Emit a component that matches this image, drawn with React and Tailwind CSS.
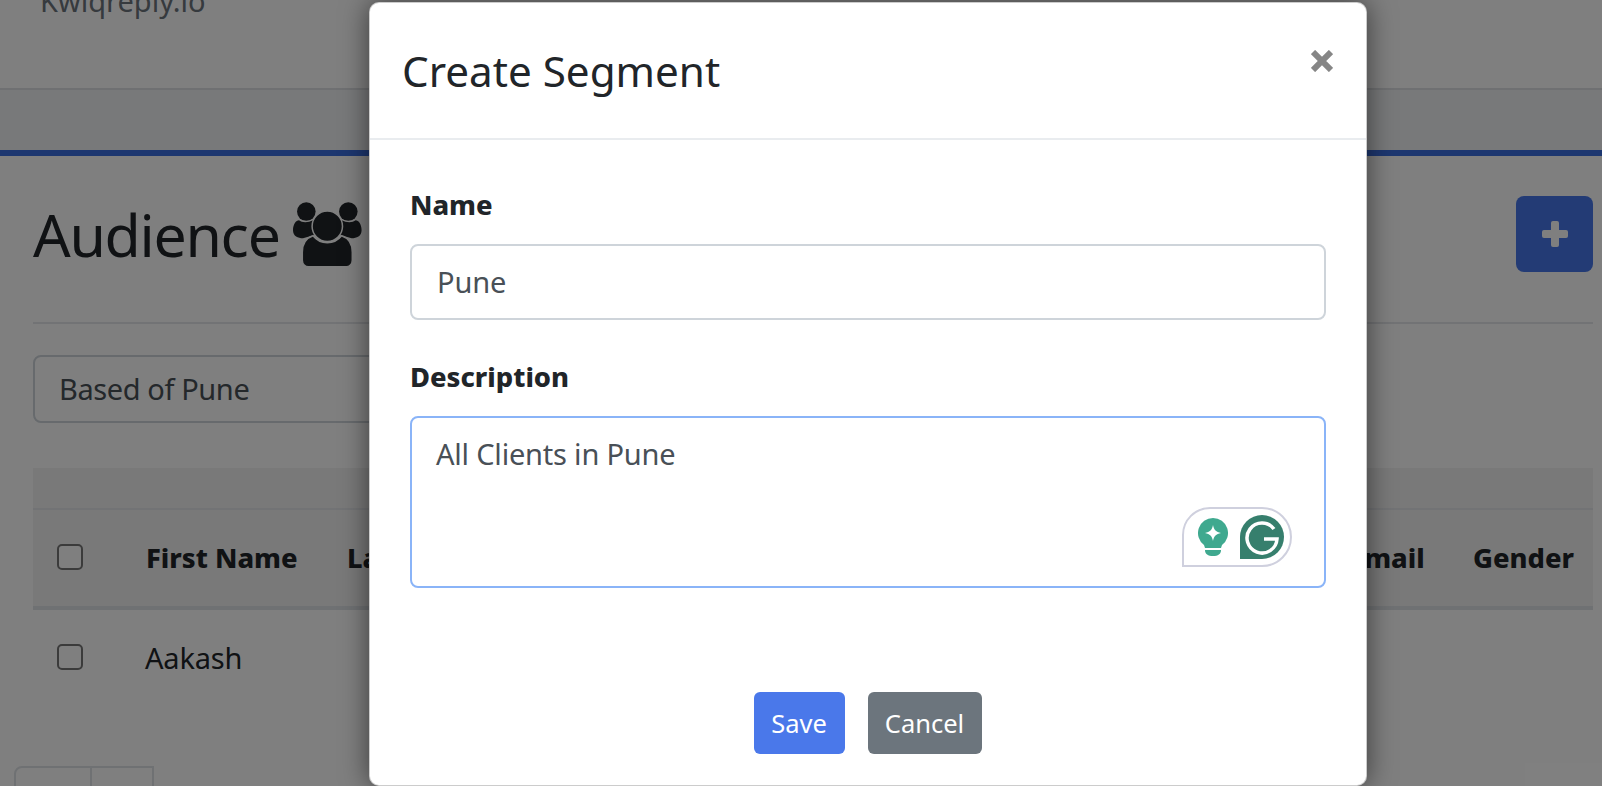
import React from 'react';

const font = { fontFamily: '"Noto Sans", "Open Sans", sans-serif' };

function UsersIcon() {
  return (
    <svg viewBox="0 0 69 64.500" className="w-[69px] h-[65px] shrink-0" fill="#212529" stroke="#fff" strokeWidth="1.500">
      <path stroke="none" d="M0 28C0 22 3 18 6 18 9 20.500 15 20.500 20 18L24 32 10 36C5 36 0 34 0 28z" />
      <path stroke="none" d="M68.600 28C68.600 22 65.600 18 62.600 18 59.600 20.500 53.600 20.500 48.600 18L44.600 32 58.600 36C63.600 36 68.600 34 68.600 28z" />
      <circle cx="13.300" cy="9.300" r="9.300" stroke="none" />
      <circle cx="55.300" cy="9.300" r="9.300" stroke="none" />
      <circle cx="34.300" cy="24" r="15.200" />
      <path d="M9.300 50C9.300 41 14 35.500 20 33.500 24 38.500 29 40.500 34.300 40.500S44.600 38.500 48.600 33.500C54.600 35.500 59.300 41 59.300 50V58C59.300 62 56.300 64.500 53.300 64.500H15.300C12.300 64.500 9.300 62 9.300 58Z" />
    </svg>
  );
}

function Checkbox() {
  return <div className="w-[26px] h-[26px] -mt-[3px] rounded-[5px] border-2 border-[#767676] bg-white shrink-0" />;
}

function Grammarly() {
  return (
    <div className="absolute right-[32px] bottom-[19px] w-[110px] h-[60px] bg-white border-2 border-[#cfd0de] rounded-tl-[28px] rounded-r-[30px] flex items-center justify-between pl-[14px] pr-[6px]">
      <svg viewBox="0 0 30 38" className="w-[30px] h-[38px]">
        <path d="M15 0a15 15 0 0 1 9 27l-1 3H7l-1-3A15 15 0 0 1 15 0z" fill="#3fa98f" />
        <path d="M15 7c1 5 3 7 8 8-5 1-7 3-8 8-1-5-3-7-8-8 5-1 7-3 8-8z" fill="#fff" />
        <path d="M7 32h16c0 4-3 6-8 6s-8-2-8-6z" fill="#3fa98f" />
      </svg>
      <svg viewBox="0 0 44 44" className="w-[44px] h-[44px]">
        <path d="M22 0a22 22 0 0 1 0 44H0V22A22 22 0 0 1 22 0z" fill="#367f6d" />
        <path d="M34 14a15 15 0 1 0 3 10H24" fill="none" stroke="#fff" strokeWidth="3.500" />
      </svg>
    </div>
  );
}

export default function App() {
  return (
    <div className="relative h-[786px] overflow-hidden bg-white text-[#212529]" style={font}>
      {/* pagina de fondo */}
      <div className="h-[90px] border-b-2 border-[#dfe1e4] overflow-hidden">
        <p className="-mt-[19px] pl-[40px] text-[29px] leading-[40px] text-[#6c757d]">Kwiqreply.io</p>
      </div>
      <div className="h-[60px] bg-[#f0f2f5]" />
      <div className="h-[6px] bg-[#3b6fe0]" />

      <div className="pl-[33px] pr-[9px]">
        <div className="flex items-center justify-between pt-[40px] h-[168px] pb-[50px] border-b-2 border-[#e5e7ea]">
          <div className="flex items-center gap-[13px]">
            <h1 className="text-[59px] leading-[70px] tracking-[-1.3px]">Audience</h1>
            <UsersIcon />
          </div>
          <button className="w-[77px] h-[76px] rounded-[8px] bg-[#4677ea] flex items-center justify-center text-white">
            <svg viewBox="0 0 26 26" className="w-[26px] h-[26px]" fill="currentColor">
              <rect x="9" y="0" width="8" height="26" rx="2" />
              <rect x="0" y="9" width="26" height="8" rx="2" />
            </svg>
          </button>
        </div>

        <div className="mt-[31px] h-[68px] w-[600px] rounded-[8px] border-2 border-[#ced4da] flex items-center pl-[24px] text-[29px] tracking-[-0.4px] text-[#495057]">
          Based of Pune
        </div>

        <div className="mt-[45px] h-[42px] bg-[#f2f2f2] border-b-2 border-[#e5e7ea]" />
        <div className="h-[100px] bg-[#f2f2f2] border-b-4 border-[#dee2e6] flex items-center pl-[24px] text-[27.300px] font-extrabold">
          <Checkbox />
          <span className="ml-[63px] w-[201px] whitespace-nowrap">First Name</span>
          <span className="w-[220px] whitespace-nowrap">Last Name</span>
          <span className="ml-[782px] w-[124px] whitespace-nowrap">Email</span>
          <span className="whitespace-nowrap">Gender</span>
        </div>
        <div className="h-[97px] flex items-center pl-[24px] text-[29px] tracking-[-0.2px]">
          <Checkbox />
          <span className="ml-[62px] -mt-[2px]">Aakash</span>
        </div>
      </div>

      <div className="ml-[14px] mt-[59px] flex w-[140px] h-[40px] border-2 border-[#dee2e6] rounded-tl-[8px]">
        <div className="w-[76px] border-r-2 border-[#dee2e6]" />
      </div>

      {/* fondo oscuro del modal */}
      <div className="absolute inset-0 bg-black/50" />

      {/* modal */}
      <div className="absolute left-[369px] top-[2px] w-[998px] h-[784px] bg-white rounded-[10px] border border-black/20 shadow-[0_0_28px_rgba(0,0,0,0.55)] flex flex-col">
        <div className="h-[137px] shrink-0 border-b-2 border-[#e9ecef] flex items-center justify-between pl-[32px] pr-[33px]">
          <h2 className="text-[42.200px] leading-[60px]">Create Segment</h2>
          <svg viewBox="0 0 22 22" className="w-[22px] h-[22px] -mt-[20px]" fill="none" stroke="#868686" strokeWidth="6">
            <path d="M2 2l18 18M20 2L2 20" />
          </svg>
        </div>

        <div className="flex-1 pl-[40px] pr-[40px] pt-[45px]">
          <label className="block text-[27.300px] leading-[40px] font-extrabold">Name</label>
          <div className="mt-[19px] h-[76px] rounded-[8px] border-2 border-[#ced4da] flex items-center pl-[25px] text-[29px] tracking-[-0.1px] text-[#495057]">
            Pune
          </div>
          <label className="block mt-[37px] text-[27.300px] leading-[40px] font-extrabold">Description</label>
          <div className="relative mt-[19px] h-[172px] rounded-[8px] border-2 border-[#8ab4f8] pl-[24px] pt-[14px] text-[29px] leading-[44px] tracking-[-0.2px] text-[#495057]">
            All Clients in Pune
            <Grammarly />
          </div>
        </div>

        <div className="flex justify-center gap-[23px] pb-[31px] pr-[1px]">
          <button className="w-[91px] h-[62px] rounded-[6px] bg-[#4a78ea] text-white text-[25.500px]">Save</button>
          <button className="w-[114px] h-[62px] rounded-[6px] bg-[#6c757d] text-white text-[25.500px]">Cancel</button>
        </div>
      </div>
    </div>
  );
}
